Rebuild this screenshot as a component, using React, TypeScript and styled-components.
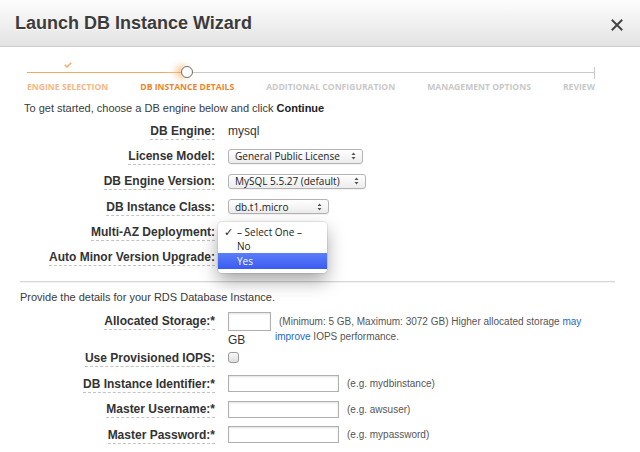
import React from "react";
import styled, { createGlobalStyle } from "styled-components";

const Global = createGlobalStyle`
  html, body { margin: 0; padding: 0; background: #fff; }
  body {
    font-family: "Liberation Sans", Helvetica, Arial, sans-serif;
    color: #333;
    width: 640px;
    height: 452px;
    overflow: hidden;
  }
`;

const Dialog = styled.div`
  width: 640px;
  height: 452px;
  background: #fff;
  overflow: hidden;
`;

const Header = styled.header`
  height: 47px;
  box-sizing: border-box;
  display: flex;
  align-items: center;
  justify-content: space-between;
  padding: 0 17px 0 15px;
  background: linear-gradient(#fdfdfd, #e3e3e3);
  border-bottom: 1px solid #cdcdcd;
`;

const Title = styled.h1`
  margin: 0;
  font-size: 18px;
  font-weight: bold;
  color: #3b3b3b;
  text-shadow: 0 1px 0 #fff;
`;

const Close = styled.button`
  border: 0;
  background: none;
  padding: 0;
  margin-top: 3px;
  width: 12px;
  height: 12px;
  display: flex;
  cursor: pointer;
`;

/* wizard progress track */
const Steps = styled.ol`
  list-style: none;
  margin: 11px 0 0 27px;
  padding: 0;
  width: 568px;
  display: flex;
  justify-content: space-between;
  position: relative;

  &::before {
    content: "";
    position: absolute;
    left: 0;
    right: 0;
    top: 14px;
    height: 1px;
    background: linear-gradient(
      to right,
      #f0a866 0,
      #f0a866 135px,
      #f6b478 148px,
      #f4a05a 156px,
      #c9c9c9 157px,
      #c9c9c9 100%
    );
  }

  &::after {
    content: "";
    position: absolute;
    right: 0;
    top: 9px;
    width: 1px;
    height: 12px;
    background: #c9c9c9;
  }
`;

type StepState = "done" | "current" | "todo";

const Step = styled.li`
  display: flex;
  flex-direction: column;
  align-items: center;
  position: relative;
  z-index: 1;
`;

const Marker = styled.div`
  height: 24px;
  display: flex;
  justify-content: center;
  align-items: flex-start;
`;

const Check = styled.svg`
  margin-top: 4px;
`;

const Dot = styled.span`
  margin-top: 8px;
  width: 10px;
  height: 10px;
  border-radius: 50%;
  background: #fff;
  border: 1.5px solid #6f6f6f;
  box-shadow: -5px 0 6px 1px rgba(246, 170, 95, 0.55);
`;

const StepLabel = styled.span<{ $state: StepState }>`
  font-family: "Open Sans", "Liberation Sans", sans-serif;
  font-size: 8.6px;
  font-weight: 700;
  line-height: 10px;
  white-space: nowrap;
  color: ${(p) =>
    p.$state === "done" ? "#f5b786" : p.$state === "current" ? "#e9872e" : "#c9c9c9"};
`;

const Body = styled.div`
  padding: 0 25px 0 20px;
`;

const Intro = styled.p<{ $indent?: number; $m: string }>`
  margin: ${(p) => p.$m};
  padding-left: ${(p) => p.$indent ?? 0}px;
  font-size: 11px;
  line-height: 14px;
  color: #3a3a3a;

  b { color: #222; }
`;

const Field = styled.div<{ $top?: boolean; $h?: number }>`
  display: grid;
  grid-template-columns: 195px 1fr;
  column-gap: 13px;
  align-items: ${(p) => (p.$top ? "start" : "center")};
  height: ${(p) => p.$h ?? 25.2}px;
`;

const Label = styled.div<{ $lh?: number }>`
  text-align: right;
  font-size: 12px;
  font-weight: bold;
  color: #333;
  white-space: nowrap;
  ${(p) => (p.$lh ? `line-height: ${p.$lh}px;` : "")}

  span {
    border-bottom: 1px dashed #c3c3c3;
    padding-bottom: 1px;
  }
`;

const Value = styled.div`
  position: relative;
  display: flex;
  align-items: center;
  font-size: 12px;
  color: #333;
`;

const Select = styled.div<{ $w: number }>`
  box-sizing: border-box;
  width: ${(p) => p.$w}px;
  height: 15px;
  border: 1px solid #b3b3b3;
  border-radius: 3px;
  background: linear-gradient(#ffffff, #ececec);
  box-shadow: 0 1px 0 rgba(0, 0, 0, 0.05);
  display: flex;
  align-items: center;
  justify-content: space-between;
  padding: 0 6px 0 6px;
  font-family: "Open Sans", "DejaVu Sans", sans-serif;
  font-size: 10px;
  color: #222;
`;

const Popup = styled.ul`
  position: absolute;
  left: -10px;
  top: -10px;
  z-index: 5;
  width: 109px;
  margin: 0;
  padding: 3px 0 4px;
  list-style: none;
  background: #fff;
  border-radius: 4px;
  box-shadow: 0 0 0 1px rgba(0, 0, 0, 0.08), 0 8px 18px rgba(0, 0, 0, 0.35);
  font-family: "Open Sans", "DejaVu Sans", sans-serif;
  font-size: 10px;
`;

const Option = styled.li<{ $active?: boolean }>`
  height: ${(p) => (p.$active ? 16 : 14)}px;
  display: flex;
  align-items: center;
  padding-left: 19px;
  position: relative;
  color: ${(p) => (p.$active ? "#fff" : "#222")};
  background: ${(p) => (p.$active ? "linear-gradient(#5b7ef9, #3a5cf0)" : "transparent")};
`;

const Tick = styled.span`
  position: absolute;
  left: 6px;
  font-size: 11px;
  font-weight: bold;
`;

const Rule = styled.hr`
  margin: 11px 0 0;
  border: 0;
  border-top: 1px solid #d6d6d6;
  box-shadow: 0 1px 0 #f3f3f3;
`;

const TextBox = styled.input<{ $w: number; $h?: number }>`
  box-sizing: border-box;
  width: ${(p) => p.$w}px;
  height: ${(p) => p.$h ?? 17}px;
  border: 1px solid #b0b0b0;
  box-shadow: inset 0 1px 2px rgba(0, 0, 0, 0.12);
  margin: 0;
  padding: 0 3px;
  font-size: 11px;
  background: #fff;
`;

const Hint = styled.span`
  margin-left: 8px;
  font-size: 10px;
  color: #555;
`;

const StorageCell = styled.div`
  display: flex;
  align-items: flex-start;
`;

const Unit = styled.div`
  display: flex;
  flex-direction: column;
  font-size: 12px;
  color: #333;
  line-height: 14px;

  span { margin-top: 2px; }
`;

const StorageHint = styled.p`
  margin: 0 0 0 4px;
  font-size: 10px;
  line-height: 15px;
  color: #555;
  text-indent: 4px;
  padding-top: 2px;
`;

const Link = styled.a`
  color: #1d6ac6;
  text-decoration: none;
`;

const CheckBox = styled.span`
  box-sizing: border-box;
  width: 11px;
  height: 11px;
  border: 1px solid #9a9a9a;
  border-radius: 3px;
  background: linear-gradient(#fafafa, #dedede);
`;

function Arrows() {
  return (
    <svg width="5" height="8" viewBox="0 0 5 8">
      <path d="M0.5 3 L2.5 0.6 L4.5 3 Z M0.5 5 L2.5 7.4 L4.5 5 Z" fill="#555" />
    </svg>
  );
}

const steps: { label: string; state: StepState }[] = [
  { label: "ENGINE SELECTION", state: "done" },
  { label: "DB INSTANCE DETAILS", state: "current" },
  { label: "ADDITIONAL CONFIGURATION", state: "todo" },
  { label: "MANAGEMENT OPTIONS", state: "todo" },
  { label: "REVIEW", state: "todo" },
];

function Lbl({ text, lh }: { text: string; lh?: number }) {
  return (
    <Label $lh={lh}>
      <span>{text}</span>
    </Label>
  );
}

export default function App() {
  return (
    <Dialog>
      <Global />
      <Header>
        <Title>Launch DB Instance Wizard</Title>
        <Close aria-label="Close">
          <svg width="12" height="12" viewBox="0 0 12 12">
            <path d="M1.5 1.5 L10.5 10.5 M10.5 1.5 L1.5 10.5" stroke="#444" strokeWidth="2" strokeLinecap="square" />
          </svg>
        </Close>
      </Header>

      <Steps>
        {steps.map((s) => (
          <Step key={s.label}>
            <Marker>
              {s.state === "done" && (
                <Check width="8" height="6" viewBox="0 0 8 6">
                  <path d="M0.8 2.8 L3 5 L7.2 0.8" fill="none" stroke="#f3ae72" strokeWidth="1.6" />
                </Check>
              )}
              {s.state === "current" && <Dot />}
            </Marker>
            <StepLabel $state={s.state}>{s.label}</StepLabel>
          </Step>
        ))}
      </Steps>

      <Body>
        <Intro $indent={4} $m="9px 0 3.5px">
          To get started, choose a DB engine below and click <b>Continue</b>
        </Intro>

        <Field>
          <Lbl text="DB Engine:" />
          <Value>mysql</Value>
        </Field>
        <Field>
          <Lbl text="License Model:" />
          <Value>
            <Select $w={135}>
              General Public License <Arrows />
            </Select>
          </Value>
        </Field>
        <Field>
          <Lbl text="DB Engine Version:" />
          <Value>
            <Select $w={138}>
              MySQL 5.5.27 (default) <Arrows />
            </Select>
          </Value>
        </Field>
        <Field>
          <Lbl text="DB Instance Class:" />
          <Value>
            <Select $w={101}>
              db.t1.micro <Arrows />
            </Select>
          </Value>
        </Field>
        <Field>
          <Lbl text="Multi-AZ Deployment:" />
          <Value>
            <Popup>
              <Option>
                <Tick>✓</Tick>– Select One –
              </Option>
              <Option>No</Option>
              <Option $active>Yes</Option>
            </Popup>
          </Value>
        </Field>
        <Field>
          <Lbl text="Auto Minor Version Upgrade:" />
          <Value />
        </Field>

        <Rule />

        <Intro $m="8px 0 8.5px">Provide the details for your RDS Database Instance.</Intro>

        <Field $top $h={33}>
          <Lbl text="Allocated Storage:*" lh={19} />
          <StorageCell>
            <Unit>
              <TextBox $w={43} $h={19} />
              <span>GB</span>
            </Unit>
            <StorageHint>
              (Minimum: 5 GB, Maximum: 3072 GB) Higher allocated storage <Link>may</Link>
              <br />
              <Link>improve</Link> IOPS performance.
            </StorageHint>
          </StorageCell>
        </Field>
        <Field $h={25.6}>
          <Lbl text="Use Provisioned IOPS:" />
          <Value>
            <CheckBox />
          </Value>
        </Field>
        <Field $h={25.6}>
          <Lbl text="DB Instance Identifier:*" />
          <Value>
            <TextBox $w={111} />
            <Hint>(e.g. mydbinstance)</Hint>
          </Value>
        </Field>
        <Field $h={25.6}>
          <Lbl text="Master Username:*" />
          <Value>
            <TextBox $w={111} />
            <Hint>(e.g. awsuser)</Hint>
          </Value>
        </Field>
        <Field $h={25.6}>
          <Lbl text="Master Password:*" />
          <Value>
            <TextBox $w={111} />
            <Hint>(e.g. mypassword)</Hint>
          </Value>
        </Field>
      </Body>
    </Dialog>
  );
}
